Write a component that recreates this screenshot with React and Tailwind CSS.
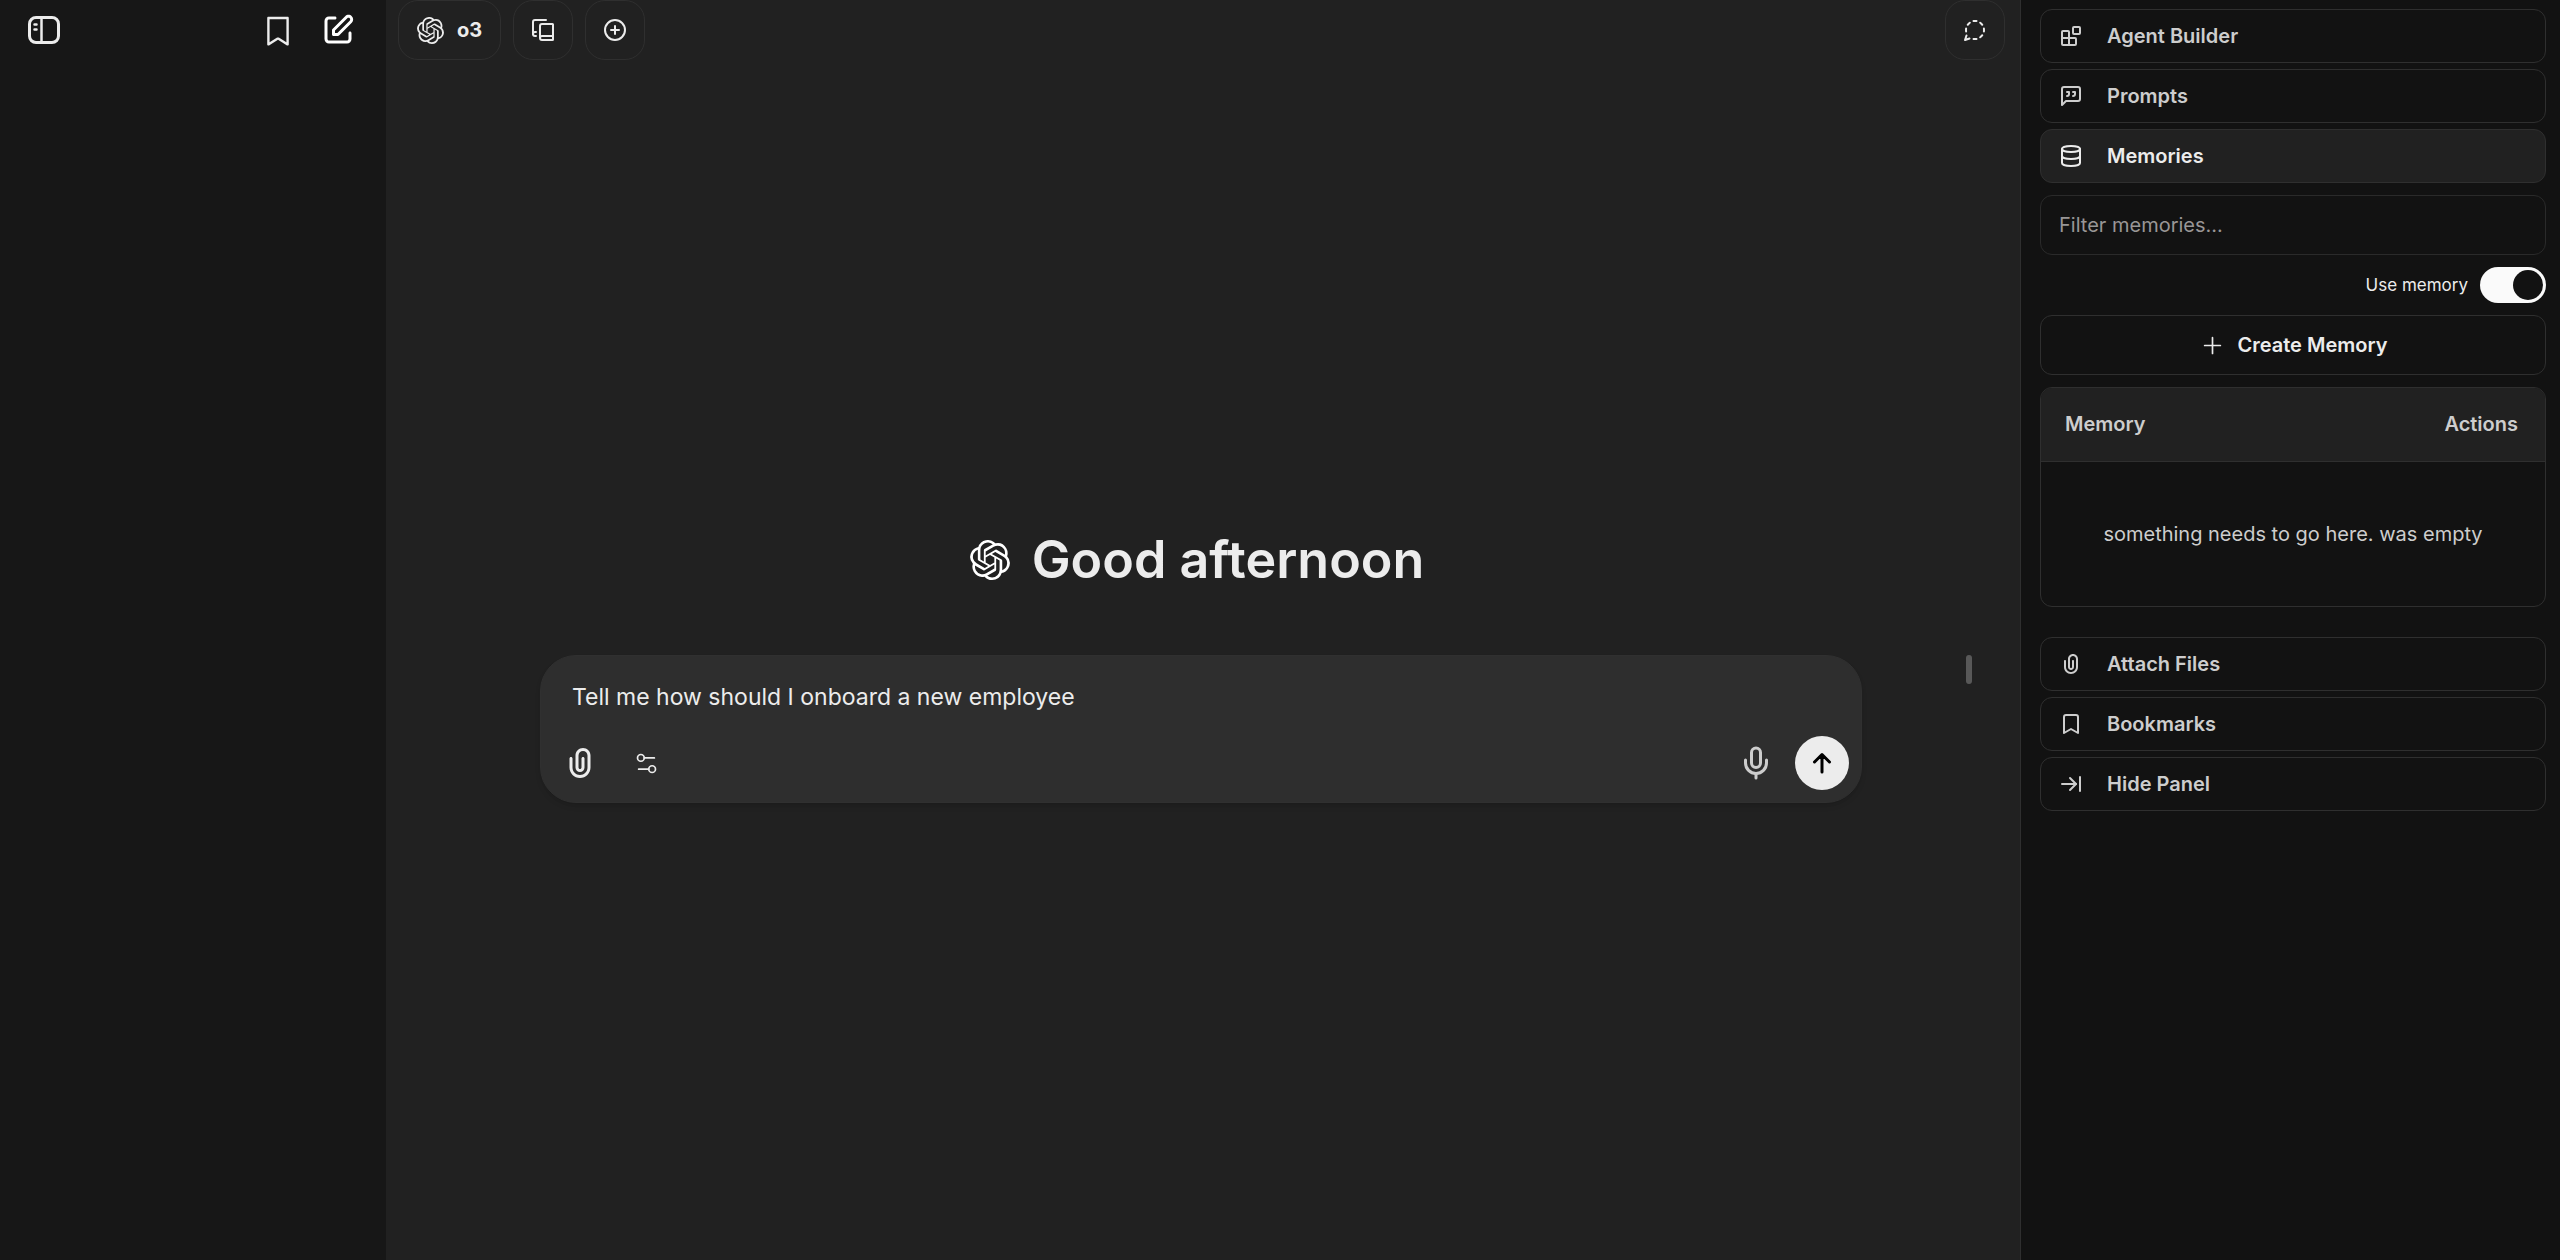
import { useState } from "react";
import { ArrowRightToLine, Bookmark, CirclePlus, Database, Mic, Plus, Settings2 } from "lucide-react";
import { RxBookmark } from "react-icons/rx";
import { SiOpenai } from "react-icons/si";

function StrokeIcon({ paths, className, children }) {
  return (
    <svg viewBox="0 0 24 24" fill="none" stroke="currentColor" strokeWidth="2" strokeLinecap="round" strokeLinejoin="round" className={className} aria-hidden="true">
      {children}
      {paths.map((d) => <path key={d} d={d} />)}
    </svg>
  );
}

const BlocksIcon = ({ className }) => (
  <StrokeIcon className={className} paths={["M10 21V8a1 1 0 0 0-1-1H4a1 1 0 0 0-1 1v12a1 1 0 0 0 1 1h12a1 1 0 0 0 1-1v-5a1 1 0 0 0-1-1H3"]}>
    <rect x="14" y="3" width="7" height="7" rx="1" />
  </StrokeIcon>
);

const QuoteIcon = ({ className }) => (
  <StrokeIcon className={className} paths={["M21 15a2 2 0 0 1-2 2H7l-4 4V5a2 2 0 0 1 2-2h14a2 2 0 0 1 2 2z", "M8 12a2 2 0 0 0 2-2V8H8", "M14 12a2 2 0 0 0 2-2V8h-2"]} />
);

const PresetsIcon = ({ className }) => (
  <StrokeIcon className={className} paths={["M2 16V4a2 2 0 0 1 2-2h11", "M22 18H11a2 2 0 1 0 0 4h10.5a.5.5 0 0 0 .5-.5v-15a.5.5 0 0 0-.5-.5H11a2 2 0 0 0-2 2v12", "M5 14H4a2 2 0 1 0 0 4h1"]} />
);

const TemporaryChatIcon = ({ className }) => (
  <StrokeIcon
    className={className}
    paths={[
      "M13.5 3.1c-.5 0-1-.1-1.5-.1s-1 .1-1.5.1",
      "M19.3 6.8a10.45 10.45 0 0 0-2.1-2.1",
      "M20.9 13.5c.1-.5.1-1 .1-1.5s-.1-1-.1-1.5",
      "M17.2 19.3a10.45 10.45 0 0 0 2.1-2.1",
      "M10.5 20.9c.5.1 1 .1 1.5.1s1-.1 1.5-.1",
      "M3.5 17.5 2 22l4.5-1.5",
      "M3.1 10.5c0 .5-.1 1-.1 1.5s.1 1 .1 1.5",
      "M6.8 4.7a10.45 10.45 0 0 0-2.1 2.1",
    ]}
  />
);

const SidebarIcon = ({ className }) => (
  <svg viewBox="0 0 36 36" fill="none" stroke="currentColor" strokeWidth="3" className={className} aria-hidden="true">
    <rect x="3.5" y="5.5" width="29" height="25" rx="6.5" />
    <path d="M15.5 5v26" strokeWidth="2.5" />
    <path d="M8.5 12.5h2M8.5 17.5h2" strokeLinecap="round" strokeWidth="2.5" />
  </svg>
);

const NewChatIcon = ({ className }) => (
  <svg viewBox="0 0 24 24" fill="currentColor" fillRule="evenodd" className={className} aria-hidden="true">
    <path d="M16.7929 2.79289C18.0118 1.57394 19.9882 1.57394 21.2071 2.79289C22.4261 4.01184 22.4261 5.98815 21.2071 7.20711L12.7071 15.7071C12.5196 15.8946 12.2652 16 12 16H9C8.44772 16 8 15.5523 8 15V12C8 11.7348 8.10536 11.4804 8.29289 11.2929L16.7929 2.79289ZM19.7929 4.20711C19.355 3.7692 18.645 3.7692 18.2071 4.2071L10 12.4142V14H11.5858L19.7929 5.79289C20.2308 5.35499 20.2308 4.64501 19.7929 4.20711ZM6 5C5.44772 5 5 5.44771 5 6V18C5 18.5523 5.44772 19 6 19H18C18.5523 19 19 18.5523 19 18V14C19 13.4477 19.4477 13 20 13C20.5523 13 21 13.4477 21 14V18C21 19.6569 19.6569 21 18 21H6C4.34315 21 3 19.6569 3 18V6C3 4.34314 4.34315 3 6 3H10C10.5523 3 11 3.44771 11 4C11 4.55228 10.5523 5 10 5H6Z" />
  </svg>
);

const AttachmentIcon = ({ className }) => (
  <svg viewBox="0 0 24 24" fill="currentColor" fillRule="evenodd" className={className} aria-hidden="true">
    <path d="M9 7C9 4.23858 11.2386 2 14 2C16.7614 2 19 4.23858 19 7V15C19 18.866 15.866 22 12 22C8.13401 22 5 18.866 5 15V9C5 8.44772 5.44772 8 6 8C6.55228 8 7 8.44772 7 9V15C7 17.7614 9.23858 20 12 20C14.7614 20 17 17.7614 17 15V7C17 5.34315 15.6569 4 14 4C12.3431 4 11 5.34315 11 7V15C11 15.5523 11.4477 16 12 16C12.5523 16 13 15.5523 13 15V9C13 8.44772 13.4477 8 14 8C14.5523 8 15 8.44772 15 9V15C15 16.6569 13.6569 18 12 18C10.3431 18 9 16.6569 9 15V7Z" />
  </svg>
);

const SendIcon = ({ className }) => (
  <svg viewBox="0 0 36 36" fill="none" stroke="currentColor" strokeWidth="3" strokeLinecap="round" strokeLinejoin="round" className={className} aria-hidden="true">
    <path d="M18 27V10M10.5 17 18 9.5l7.5 7.5" />
  </svg>
);

function HeaderButton({ label, className = "w-[60px]", children }) {
  return (
    <button aria-label={label} className={`flex h-[60px] items-center justify-center rounded-[20px] border border-[#2f2f2f] text-[#ececec] hover:bg-[#2f2f2f] ${className}`}>
      {children}
    </button>
  );
}

function PanelLink({ icon: Icon, label, active }) {
  return (
    <button
      className={`flex h-[54px] w-full items-center gap-6 rounded-xl border border-[#2f2f2f] px-[18px] text-[20px] font-semibold ${active ? "bg-[#212121] text-[#ececec]" : "text-[#cdcdcd] hover:bg-[#212121]"}`}
    >
      <Icon className="size-6" />
      {label}
    </button>
  );
}

function MemoryPanel() {
  const [filter, setFilter] = useState("");
  const [enabled, setEnabled] = useState(true);

  return (
    <div className="my-1.5 flex flex-col gap-3">
      <input
        type="text"
        aria-label="Filter memories"
        value={filter}
        onChange={(e) => setFilter(e.target.value)}
        placeholder="Filter memories..."
        className="h-[60px] w-full rounded-xl border border-[#2a2a2a] bg-transparent px-[18px] text-[20px] text-[#ececec] outline-none placeholder:text-[#999696]"
      />

      <label className="flex items-center justify-end gap-3 text-[17px] leading-6 text-[#ececec]">
        Use memory
        <input
          type="checkbox"
          role="switch"
          checked={enabled}
          onChange={(e) => setEnabled(e.target.checked)}
          className="flex h-9 w-[66px] appearance-none items-center rounded-full bg-[#424242] p-[3px] before:size-[30px] before:rounded-full before:bg-[#121212] checked:justify-end checked:bg-[#fafafa]"
        />
      </label>

      <button className="flex h-[60px] w-full items-center justify-center gap-3 rounded-xl border border-[#2f2f2f] text-[20px] font-semibold text-[#ececec] hover:bg-[#212121]">
        <Plus className="size-[27px]" strokeWidth={1.5} />
        Create Memory
      </button>

      <div className="overflow-hidden rounded-xl border border-[#2f2f2f]">
        <table className="w-full text-[20px]">
          <thead>
            <tr className="h-[73px] border-b border-[#2f2f2f] bg-[#212121] text-[#cdcdcd]">
              <th scope="col" className="px-6 text-left font-semibold">Memory</th>
              <th scope="col" className="px-[27px] text-right font-semibold">Actions</th>
            </tr>
          </thead>
          <tbody>
            <tr className="h-[145px]">
              <td colSpan={2} className="text-center text-[#cdcdcd]">something needs to go here. was empty</td>
            </tr>
          </tbody>
        </table>
      </div>
    </div>
  );
}

function Composer() {
  const [text, setText] = useState("Tell me how should I onboard a new employee");

  return (
    <form onSubmit={(e) => e.preventDefault()} className="flex w-full max-w-[1322px] flex-col rounded-[36px] border border-[#303030] bg-[#2e2e2e] shadow-md">
      <textarea
        rows={1}
        aria-label="Message input"
        value={text}
        onChange={(e) => setText(e.target.value)}
        className="block h-20 w-full resize-none bg-transparent px-[31px] pt-[23px] text-[23px] leading-9 text-[#ececec] outline-none"
      />
      <div className="flex items-center justify-between px-3 pb-3">
        <div className="flex items-center gap-3">
          <button type="button" aria-label="Attach files" className="flex size-[54px] items-center justify-center rounded-full text-[#ececec]">
            <AttachmentIcon className="size-9" />
          </button>
          <button type="button" aria-label="Tools" className="flex size-[54px] items-center justify-center rounded-full text-[#ececec]">
            <Settings2 className="size-[27px]" strokeWidth={1.5} />
          </button>
        </div>
        <div className="flex items-center gap-3">
          <button type="button" aria-label="Use microphone" className="flex size-[54px] items-center justify-center rounded-full text-[#cdcdcd]">
            <Mic className="size-9" />
          </button>
          <button type="submit" aria-label="Send message" className="flex size-[54px] items-center justify-center rounded-full bg-[#ececec] text-black">
            <SendIcon className="size-9" />
          </button>
        </div>
      </div>
    </form>
  );
}

export default function App() {
  return (
    <div className="flex min-h-screen bg-[#212121] font-['Inter',sans-serif] text-[#ececec]">
      <nav className="w-[386px] shrink-0 bg-[#171717]">
        <div className="flex h-[60px] items-center justify-between pl-[26px] pr-[30px]">
          <button aria-label="Close sidebar"><SidebarIcon className="size-9" /></button>
          <div className="flex items-center gap-6">
            <button aria-label="Bookmarks"><RxBookmark className="size-9" /></button>
            <button aria-label="New chat" className="text-white"><NewChatIcon className="size-9" /></button>
          </div>
        </div>
      </nav>

      <main className="flex min-w-0 flex-1 flex-col">
        <header className="flex items-center justify-between pl-3 pr-[15px]">
          <div className="flex items-center gap-3">
            <HeaderButton className="gap-[13px] px-[18px] text-[20px] font-bold">
              <SiOpenai className="size-[27px]" />
              o3
            </HeaderButton>
            <HeaderButton label="Presets"><PresetsIcon className="size-6" /></HeaderButton>
            <HeaderButton label="Add multi-conversation"><CirclePlus className="size-6" /></HeaderButton>
          </div>
          <HeaderButton label="Temporary chat"><TemporaryChatIcon className="size-6" /></HeaderButton>
        </header>

        <section className="flex flex-1 flex-col justify-center gap-16 pt-3">
          <div className="flex items-center justify-center gap-[22px] pr-3">
            <SiOpenai className="size-10 text-white" />
            <h1 className="text-[52px] leading-[62px] font-semibold">Good afternoon</h1>
          </div>
          <div className="relative flex justify-center pr-1">
            <Composer />
            <span className="absolute top-0 right-12 h-[29px] w-1.5 rounded-full bg-[#585858]" />
          </div>
        </section>
      </main>

      <aside className="w-[540px] shrink-0 border-l border-[#2f2f2f] bg-[#121212] pt-[9px] pr-3.5 pl-[19px]">
        <div className="flex flex-col gap-1.5">
          <PanelLink icon={BlocksIcon} label="Agent Builder" />
          <PanelLink icon={QuoteIcon} label="Prompts" />
          <PanelLink icon={Database} label="Memories" active />
          <MemoryPanel />
        </div>
        <div className="mt-6 flex flex-col gap-1.5">
          <PanelLink icon={AttachmentIcon} label="Attach Files" />
          <PanelLink icon={Bookmark} label="Bookmarks" />
          <PanelLink icon={ArrowRightToLine} label="Hide Panel" />
        </div>
      </aside>
    </div>
  );
}
